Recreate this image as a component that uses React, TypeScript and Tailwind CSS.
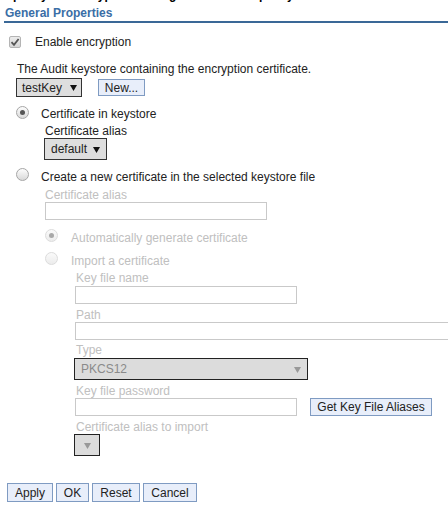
import React from "react";

function Arrow({ color }: { color: string }) {
  return (
    <svg width="7" height="7" viewBox="0 0 7 7">
      <path d="M0 1 L7 1 L3.5 7 Z" fill={color} />
    </svg>
  );
}

function Radio({ checked, disabled, className }: { checked?: boolean; disabled?: boolean; className?: string }) {
  return (
    <span
      className={
        (disabled
          ? "border-[#dcdcdc] bg-gradient-to-b from-[#fafafa] to-[#ececec] "
          : "border-[#a6a6a6] bg-gradient-to-b from-[#fdfdfd] to-[#d9d9d9] ") +
        "flex shrink-0 w-[13px] h-[13px] rounded-full border items-center justify-center " +
        (className || "")
      }
    >
      {checked && (
        <span className={(disabled ? "bg-[#a8a8a8] " : "bg-[#555555] ") + "w-[5px] h-[5px] rounded-full"} />
      )}
    </span>
  );
}

function Checkbox() {
  return (
    <span className="flex shrink-0 w-[12px] h-[12px] rounded-[2px] border border-[#b4b4b4] bg-gradient-to-b from-[#ececec] to-[#d6d6d6] items-center justify-center">
      <svg width="10" height="10" viewBox="0 0 10 10">
        <path d="M1.5 5.2 L4 7.8 L8.6 2" stroke="#555" strokeWidth="1.8" fill="none" />
      </svg>
    </span>
  );
}

export default function App() {
  return (
    <div className="w-[448px] h-[518px] overflow-hidden bg-white text-[#222] text-[12px] leading-[14px] font-['Liberation_Sans',Arial,sans-serif]">
      <div className="h-[3px] overflow-hidden">
        <div className="-mt-[12px] pl-[5px] font-bold text-black whitespace-nowrap">
          Specify the encryption settings for the audit policy
        </div>
      </div>
      <div className="ml-[4px] pt-[2px] pl-[1px] h-[20px] leading-[16px] font-bold text-[#3a6ea6] border-b-2 border-[#3a6897]">
        General Properties
      </div>

      <div className="mt-[12px] h-[14px] flex items-center">
        <span className="ml-[9px]">
          <Checkbox />
        </span>
        <span className="ml-[14px]">Enable encryption</span>
      </div>

      <div className="mt-[13px] pl-[17px] whitespace-nowrap">
        The Audit keystore containing the encryption certificate.
      </div>

      <div className="mt-[2px] flex items-center pl-[16px]">
        <div className="w-[66px] h-[19px] bg-[#dedede] border border-[#333] flex items-center justify-between pl-[5px] pr-[4px]">
          <span>testKey</span>
          <Arrow color="#111" />
        </div>
        <div className="ml-[16px] w-[47px] h-[17px] bg-[#e8eefa] border border-[#7f9bc2] flex items-center justify-center">
          New...
        </div>
      </div>

      <div className="mt-[10px] h-[14px] flex items-start pl-[16px]">
        <Radio checked className="-mt-[1px]" />
        <span className="ml-[12px]">Certificate in keystore</span>
      </div>

      <div className="mt-[3px] pl-[45px]">Certificate alias</div>
      <div className="pl-[44px]">
        <div className="w-[63px] h-[22px] bg-[#dedede] border border-[#333] flex items-center justify-between pl-[6px] pr-[6px]">
          <span>default</span>
          <Arrow color="#111" />
        </div>
      </div>

      <div className="mt-[10px] h-[14px] flex items-start pl-[16px]">
        <Radio className="-mt-[2px]" />
        <span className="ml-[12px] whitespace-nowrap">Create a new certificate in the selected keystore file</span>
      </div>

      <div className="text-[#c0c0c0]">
        <div className="mt-[4px] pl-[45px]">Certificate alias</div>
        <div className="pl-[45px]">
          <div className="w-[222px] h-[18px] border border-[#c9c9c9] bg-white" />
        </div>

        <div className="mt-[11px] h-[14px] flex items-start pl-[45px]">
          <Radio checked disabled className="-mt-[2px]" />
          <span className="ml-[13px]">Automatically generate certificate</span>
        </div>

        <div className="mt-[9px] h-[14px] flex items-start pl-[45px]">
          <Radio disabled className="-mt-[2px]" />
          <span className="ml-[13px]">Import a certificate</span>
        </div>

        <div className="pl-[75px]">
          <div className="mt-[3px] pl-[1px]">Key file name</div>
          <div className="mt-[1px] w-[222px] h-[18px] border border-[#c9c9c9] bg-white" />

          <div className="mt-[4px] pl-[1px]">Path</div>
          <div className="w-[420px] h-[18px] border border-[#c9c9c9] bg-white" />

          <div className="mt-[3px] pl-[1px]">Type</div>
          <div className="mt-[1px] -ml-[1px] w-[234px] h-[22px] bg-[#dcdcdc] border border-[#222] flex items-center justify-between pl-[6px] pr-[6px] text-[#8a8a8a]">
            <span>PKCS12</span>
            <Arrow color="#999" />
          </div>

          <div className="mt-[4px] pl-[1px]">Key file password</div>
          <div className="flex items-center">
            <div className="w-[222px] h-[18px] border border-[#c9c9c9] bg-white" />
            <div className="ml-[13px] w-[122px] h-[18px] bg-[#e8eefa] border border-[#7f9bc2] flex items-center justify-center text-[#222] whitespace-nowrap">
              Get Key File Aliases
            </div>
          </div>

          <div className="mt-[4px] pl-[1px]">Certificate alias to import</div>
          <div className="-ml-[1px] w-[26px] h-[22px] bg-[#dcdcdc] border border-[#222] flex items-center justify-center">
            <Arrow color="#999" />
          </div>
        </div>
      </div>

      <div className="mt-[27px] pl-[7px] flex gap-[3px]">
        <div className="w-[46px] h-[19px] bg-[#e8eefa] border border-[#7f9bc2] flex items-center justify-center">Apply</div>
        <div className="w-[33px] h-[19px] bg-[#e8eefa] border border-[#7f9bc2] flex items-center justify-center">OK</div>
        <div className="w-[48px] h-[19px] bg-[#e8eefa] border border-[#7f9bc2] flex items-center justify-center">Reset</div>
        <div className="w-[54px] h-[19px] bg-[#e8eefa] border border-[#7f9bc2] flex items-center justify-center">Cancel</div>
      </div>
    </div>
  );
}
